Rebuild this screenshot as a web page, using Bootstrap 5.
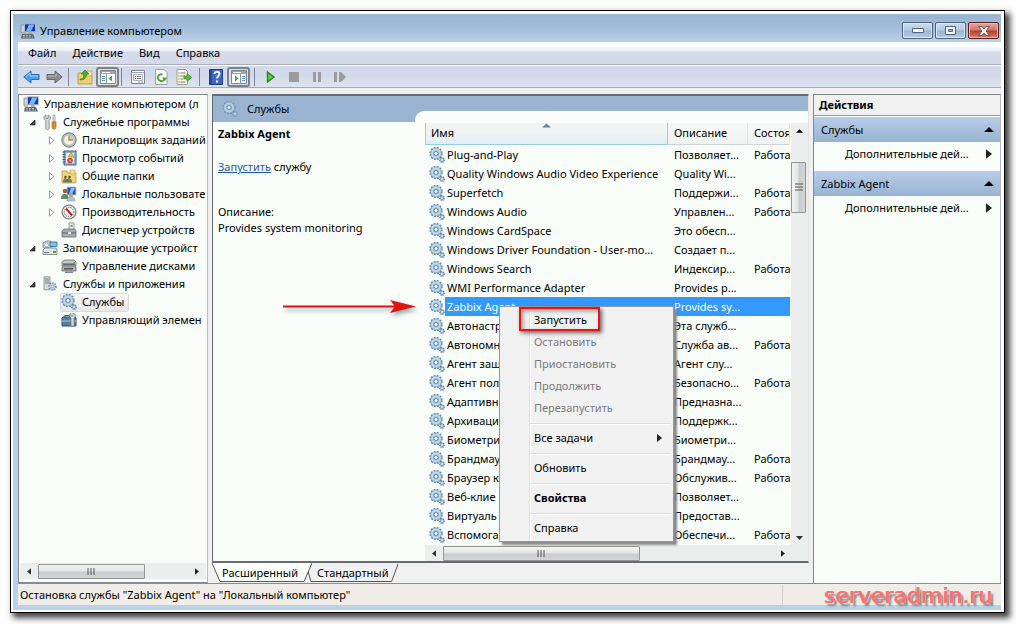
<!DOCTYPE html>
<html lang="ru">
<head>
<meta charset="utf-8">
<meta name="viewport" content="width=device-width, initial-scale=1">
<title>Управление компьютером</title>
<link rel="stylesheet" href="https://cdn.jsdelivr.net/npm/bootstrap@5.3.0/dist/css/bootstrap.min.css">
<style>
:root{--paper:#f9fdf9;--face:#f0f0f0;--steel:#9ab3d0;--edge:#828790}
body{font:11px/18px "Noto Sans","Open Sans",sans-serif;color:#000;background:#fdfdfd;height:100vh;padding:10px 11px 11px 10px;overflow:hidden}
button{font:inherit;color:inherit;background:none;border:0;padding:0;text-align:left}
svg{display:block;flex:none}
.ic{width:16px;height:16px}
.window{height:100%;border:1px solid #000;background:#fff;padding:3px 3px 2px 2px;box-shadow:4px 4px 6px 1px #444}
.frame{height:100%;background:#b9d1ea;padding:0 0 5px 5px}
.titlebar{height:28px;margin-left:-5px;padding:8px 2px 0 7px;background:linear-gradient(#97b4d1,#a4bfdc 55%,#b9d1ea)}
.cap{width:31px;height:17px;border:1px solid #50647e;border-radius:2px;background:linear-gradient(#c9dcee,#b3cbe3 48%,#9ab5d1 52%,#b4cde6);box-shadow:inset 0 0 0 1px #dbe8f5}
.cap.close-cap{border-color:#5b1d1b;background:linear-gradient(#e3a79c,#d4756a 48%,#b93a26 52%,#d08578);box-shadow:inset 0 0 0 1px #e9bcb2}
.caps{gap:2px}
.menubar{height:23px;padding-left:10px;background:linear-gradient(#fbfdfd 20%,#e8ecf5 40%,#d4daea 45%,#d4daea);border-bottom:1px solid #a9aeb8}
.toolbar{height:23px;padding:1px 0 0 2px;background:linear-gradient(#fff 0 1px,#d2d9ea 1px 50%,#dde4f0);border-bottom:1px solid #a5abb5}
.toolbar button{width:23px;height:20px;display:flex;align-items:center;justify-content:center}
.toolbar .on{border:2px solid #7c828b;border-radius:3px;background:#dcdfe6}
.rule{width:1px;height:18px;background:#80858e;margin-left:2px}
.panes{display:grid;grid-template-columns:190px minmax(0,1fr) 188px;column-gap:4px;background:var(--face);padding-top:6px}
.pane{background:var(--paper);border:1px solid var(--edge);border-right-color:#b9bcc2;min-width:0}
.treeitem{height:18px;white-space:nowrap;gap:5px}
.twist{width:9px;height:9px;margin-right:5px}
.lvl1{padding-left:9px}.lvl2{padding-left:28px}
.lvl2.leaf{padding-left:42px}
.picked{background:linear-gradient(#f8f8f8,#e6e6e6);box-shadow:0 0 0 1px #d9d9d9;border-radius:2px;padding-right:4px;margin-right:auto;height:17px;gap:5px}
.track{background:#eaeeec;height:16px}
.track button{width:18px;height:16px;display:flex;align-items:center;justify-content:center}
.treetrack{margin:0 1px 3px}
.thumb{height:15px;border:1px solid #949494;border-radius:1px;background:linear-gradient(#f3f3f3,#e4e6e6 45%,#c8cccd 55%,#d3d6d7)}
.midhead{height:26px;background:var(--steel);padding-left:9px;gap:9px}
.mid{border:2px solid #696b70;border-width:2px 1px 2px 1px;border-right-color:#e3e3e3;background:var(--paper)}
.info{width:212px;padding:3px 5px}
.info p{margin:0 0 15px}
.info a{color:#1e56a8}
.about{line-height:16px;padding-top:4px}
.listwrap{min-width:0;padding-top:1px}
.listwrap::before{content:"";position:absolute;left:-10px;right:0;top:-11px;height:12px;background:#fbfdfc;border-radius:9px 0 0 0}
.svc{width:365px;table-layout:fixed;border-collapse:separate;border-spacing:0}
.svc th{height:22px;line-height:18px;font-weight:400;padding:0 0 2px 6px;background:linear-gradient(#f6f8f7,#f1f3f3);border-bottom:1px solid #d0d4d6;border-right:1px solid #dfe3e5;white-space:nowrap;overflow:hidden}
.svc th:first-child{background:linear-gradient(#f2f4f4 40%,#dfeef5);border:1px solid #96cbe2;border-top:0;padding-left:5px;position:relative}
.svc th svg{position:absolute;left:116px;top:0}
.svc td{height:19px;line-height:19px;padding:0 0 0 6px;white-space:nowrap;overflow:hidden}
.svc td:first-child{padding-left:4px}
.svc .nm{padding-left:2px}
.svc tr.sel td+td,.svc tr.sel .nm{background:#3399ff;color:#fff}
.vtrack{width:17px;background:#eceeed}
.vtrack button{width:16px;height:15px;display:flex;align-items:center;justify-content:center}
.vthumb{width:15px;height:51px;border:1px solid #949494;border-radius:1px;background:linear-gradient(90deg,#f3f3f3,#e4e6e6 45%,#c8cccd 55%,#d3d6d7);margin-top:24px}
.ctx{position:absolute;left:74px;top:184px;width:175px;padding:2px;border:1px solid #979797;background:linear-gradient(90deg,transparent 29px,#e0e0e0 29px 30px,#fff 30px 31px,transparent 31px) #f1f1f1;box-shadow:3px 3px 2px #8a8a8a;z-index:2}
.ctx button{height:22px;width:100%;padding:0 9px 0 32px;display:flex;align-items:center;justify-content:space-between}
.ctx button:disabled{color:#7a7a7a}
.ctx hr{margin:4px 0 2px 28px;border:0;border-top:1px solid #dcdcdc;border-bottom:1px solid #fff;opacity:1}
.mark-box{position:absolute;left:19px;top:0;width:81px;height:24px;border:2px solid #f01010;box-shadow:2px 2px 4px #666,inset 2px 2px 4px #999;pointer-events:none}
.pointer{position:absolute;left:69px;top:177px;filter:drop-shadow(2px 3px 2px #9aa)}
.tabs{height:20px}
.tabs button{position:relative;height:19px;z-index:0}
.tabs svg{position:absolute;inset:0;width:100%;height:100%;z-index:-1}
.tab-a{padding:0 14px 0 10px}
.tab-b{padding:0 10px 0 9px;margin-left:-4px}
.acthead{height:21px;background:var(--face);border-bottom:1px solid #9c9c9c;margin-bottom:1px;padding-left:5px;font-weight:700}
.group{height:25px;background:linear-gradient(#b8cde8,#98b3d1);padding:0 6px 0 7px}
.act{height:29px;padding:0 8px 6px 31px}
.status{height:22px;background:#f0ede9;border-top:1px solid #898c92;padding-left:2px}
.status i{width:1px;height:20px;background:#d0cfcd}
.status i+i{margin:0 85px 0 132px}
.stamp{position:absolute;right:24px;bottom:16px;font:22px/24px "DejaVu Sans",sans-serif;color:#f87474;text-shadow:1px 0 0 #f87474,3px 3px 2px #777}
</style>
</head>
<body>
<svg width="0" height="0" class="position-absolute">
<defs>
<symbol id="pc" viewBox="0 0 16 16"><path d="M1 2h4v8H1z" fill="#cfd3d6" stroke="#83898f" stroke-width=".8"/><path d="M4.500.800h11v8h-11z" fill="#1836b8" stroke="#b4bec8"/><path d="M9 1.500h5.500L11 8H6z" fill="#79b3f0"/><path d="M8 9h4v2H8z" fill="#aab0b5"/><path d="M2 11h11l2 4.500H1z" fill="#5f696f"/><path d="M3 12.500h9M3 14h10" stroke="#c6cdd0" stroke-width=".8" stroke-dasharray="2 1"/></symbol>
<symbol id="gear" viewBox="0 0 16 16"><circle cx="7" cy="6.500" r="5.800" fill="none" stroke="#6587a6" stroke-width="1.800" stroke-dasharray="1.800 1.240"/><circle cx="7" cy="6.500" r="4" fill="none" stroke="#7fa6c4" stroke-width="3.600"/><circle cx="7" cy="6.500" r="3.900" fill="none" stroke="#c0ddef" stroke-width="2"/><circle cx="7" cy="6.500" r="2" fill="#fff" stroke="#5b7c99" stroke-width=".9"/><circle cx="13" cy="13" r="2.200" fill="#a0c0d6" stroke="#6587a6" stroke-width="1.500" stroke-dasharray="1 .73"/><circle cx="13" cy="13" r=".8" fill="#fff"/></symbol>
<symbol id="tools" viewBox="0 0 16 16"><path d="M4 1v3.500h2V1c3 1 3 4 1.200 5.500V14c0 2-3.400 2-3.400 0V6.500C1 5 1.500 2 4 1z" fill="#d6d9db" stroke="#777d82" stroke-width=".8"/><path d="M11 1h2v7h-2z" fill="#dfe2e4" stroke="#888" stroke-width=".6"/><path d="M10 8h4v5c0 3-4 3-4 0z" fill="#e88a2c" stroke="#a65a18" stroke-width=".6"/></symbol>
<symbol id="clock" viewBox="0 0 16 16"><circle cx="8" cy="8" r="7.200" fill="#b9bfc4" stroke="#747a80"/><circle cx="8" cy="8" r="5.300" fill="#f4f6e4" stroke="#9da3a8" stroke-width=".6"/><path d="M8 8V3a5 5 0 0 1 5 5z" fill="#b9d8f4"/><path d="M8 3.500V8h4" fill="none" stroke="#c08b20" stroke-width="1.400"/></symbol>
<symbol id="log" viewBox="0 0 16 16"><path d="M3 1h12v14H3z" fill="#8fb6d8" stroke="#3c6690"/><path d="M5 3h8v10H5z" fill="#e8edf0"/><path d="M1.500 2h3M1.500 4.500h3M1.500 7h3M1.500 9.500h3M1.500 12h3" stroke="#48657f"/><path d="M10 2l3 5H7.500z" fill="#f3bb2e" stroke="#9b7418" stroke-width=".5"/><circle cx="9" cy="10.500" r="2.800" fill="#d33c2d"/><path d="M8 9.500l2 2M10 9.500l-2 2" stroke="#fff" stroke-width=".8"/></symbol>
<symbol id="folder" viewBox="0 0 16 16"><path d="M1 3h5l1 2h8v10H1z" fill="#f3d377" stroke="#c09a3a" stroke-width=".8"/><path d="M9 2h5v4H9z" fill="#f9e59a" stroke="#c09a3a" stroke-width=".6"/><circle cx="4.500" cy="9" r="1.200" fill="#57452b"/><circle cx="8.500" cy="9" r="1.200" fill="#57452b"/><path d="M2.500 14c0-4.500 3.500-4.500 3.500-1 0-3.500 4.500-3.500 4.500 1z" fill="#5f8b7a" stroke="#345" stroke-width=".5"/></symbol>
<symbol id="users" viewBox="0 0 16 16"><path d="M6 1h9v8H6z" fill="#2852b8" stroke="#b9c2cc"/><path d="M10 2h4l-3 6H8z" fill="#8bbcf0"/><circle cx="4" cy="5" r="2.300" fill="#8d6844"/><path d="M0 13c0-7 7-7 8 0z" fill="#5d8c5a"/><circle cx="10" cy="9" r="2" fill="#c79d78"/><path d="M6 15c0-6 8-6 8 0z" fill="#aec4d6" stroke="#758899" stroke-width=".5"/></symbol>
<symbol id="perf" viewBox="0 0 16 16"><circle cx="8" cy="8" r="6.900" fill="#f4f4f4" stroke="#858585" stroke-width="1.400"/><circle cx="8" cy="8" r="4.700" fill="#fff" stroke="#555" stroke-dasharray="1.300 1"/><path d="M5 4.500l6 7" stroke="#cb2020" stroke-width="2"/></symbol>
<symbol id="device" viewBox="0 0 16 16"><path d="M8 .800h5v7H8z" fill="#e2e5e6" stroke="#888e92" stroke-width=".8"/><path d="M9.500 3h2v2h-2z" fill="#75a875"/><path d="M1 9l2-2h11l1 2v6H1z" fill="#a5abb0" stroke="#687077" stroke-width=".8"/><path d="M1 10.500h14v1H1z" fill="#59636a"/><path d="M7 10h3v2H7z" fill="#e0e3e5"/></symbol>
<symbol id="storage" viewBox="0 0 16 16"><path d="M1 3l3-2h5v7H1z" fill="#c9d0d4" stroke="#7b858b" stroke-width=".8"/><circle cx="4.500" cy="5" r="2" fill="#f0f3f4" stroke="#8b9499" stroke-width=".6"/><path d="M8 2h7v4.500H8z" fill="#7fc2e6" stroke="#3a7fae"/><path d="M1 10l2-2h11l1 2v4.500H1z" fill="#e0e3e5" stroke="#737b80" stroke-width=".8"/><path d="M2 12.500h5" stroke="#777"/><path d="M11 11h3v2h-3z" fill="#3caf38"/></symbol>
<symbol id="disk" viewBox="0 0 16 16"><path d="M1 4l3-2h9l2 2v4H1z" fill="#c4c8ca" stroke="#676d70" stroke-width=".8"/><path d="M2 5.500h12v1.300H2z" fill="#50575b"/><path d="M1 9l1-1h12l1 1v4H1z" fill="#a9adaf" stroke="#676d70" stroke-width=".8"/><path d="M3 10h9v1.500H3z" fill="#50575b"/><path d="M4 13.500h8v1.500H4z" fill="#83898c"/><path d="M12.500 4h1.500v1.200h-1.500z" fill="#45b045"/></symbol>
<symbol id="server" viewBox="0 0 16 16"><path d="M2 .8h6v13H2z" fill="#d6dade" stroke="#7e868c" stroke-width=".8"/><path d="M3 3h4M3 5h4M3 7h4" stroke="#727b82"/><circle cx="10.500" cy="10.500" r="3.500" fill="#c1daea" stroke="#6b8ca8" stroke-width="1.600" stroke-dasharray="1.500 1.100"/><circle cx="10.500" cy="10.500" r="1.300" fill="#fff" stroke="#61819d" stroke-width=".6"/></symbol>
<symbol id="wmi" viewBox="0 0 16 16"><path d="M1 6l1-1h12l1 1v8H1z" fill="#557f9d" stroke="#34536a"/><path d="M4 5V3.500h5V5" fill="none" stroke="#3f5a6b" stroke-width="1.200"/><path d="M1 9h14" stroke="#a9c6d8"/><path d="M10 1v3h2V1c3 1 3 3.500 1 5v8h-3V6C8 4.500 8 2 10 1z" fill="#d2dce2" stroke="#6a7880" stroke-width=".7"/></symbol>
<symbol id="opened" viewBox="0 0 9 9"><path d="M7 2v5H2z" fill="#404040" stroke="#111" stroke-width=".6"/></symbol>
<symbol id="closed" viewBox="0 0 9 9"><path d="M2.500.800L7 4.500 2.500 8.200z" fill="#fff" stroke="#999"/></symbol>
<symbol id="al" viewBox="0 0 5 8"><path d="M5 0v8L0 4z" fill="#333"/></symbol>
<symbol id="ar" viewBox="0 0 5 8"><path d="M0 0v8l5-4z" fill="#222"/></symbol>
<symbol id="up" viewBox="0 0 10 5"><path d="M0 5h10L5 0z"/></symbol>
</defs>
</svg>

<div class="window position-relative">
<div class="frame d-flex flex-column">
<header class="titlebar d-flex align-items-start">
  <div class="d-flex align-items-center flex-grow-1 gap-1"><svg class="ic"><use href="#pc"/></svg><span>Управление компьютером</span></div>
  <div class="caps d-flex">
    <button class="cap d-flex align-items-center justify-content-center" aria-label="Свернуть"><svg width="12" height="5"><path d="M.5.500h11v4H.5z" fill="#fff" stroke="#50647e"/></svg></button>
    <button class="cap d-flex align-items-center justify-content-center" aria-label="Развернуть"><svg width="11" height="9"><path d="M.5.500h10v8H.5zM3.500 3.500v2h4v-2z" fill="#fff" stroke="#50647e" fill-rule="evenodd"/></svg></button>
    <button class="cap close-cap d-flex align-items-center justify-content-center" aria-label="Закрыть"><svg width="12" height="10"><path d="M.5.500h3.500l2 2.500 2-2.500h3.500L8 5l3.500 4.500H8L6 7 4 9.500H.5L4 5z" fill="#fff" stroke="#5c3a40" stroke-width=".8"/></svg></button>
  </div>
</header>
<nav class="menubar d-flex align-items-center gap-3">
  <button>Файл</button><button>Действие</button><button>Вид</button><button>Справка</button>
</nav>
<div class="toolbar d-flex align-items-center">
  <button aria-label="Назад"><svg width="17" height="14"><path d="M.8 7L8 1v3.500h8v5H8V13z" fill="#47a2ec" stroke="#2b6fae"/><path d="M3 6.500L7 3v3h8" fill="none" stroke="#a6d5fa"/></svg></button>
  <button aria-label="Вперёд"><svg width="17" height="14"><path d="M16.200 7L9 1v3.500H1v5h8V13z" fill="#8c8c8c" stroke="#666"/><path d="M2 6h8V3.500" fill="none" stroke="#bbb"/></svg></button>
  <span class="rule"></span>
  <button class="ms-1" aria-label="Вверх"><svg class="ic"><path d="M1 4h5l1 2h8v9H1z" fill="#f0cd72" stroke="#b58f3c" stroke-width=".8"/><path d="M10 2h5v5h-5z" fill="#f8e3a0" stroke="#b58f3c" stroke-width=".6"/><path d="M3 10c4 0 4-3 3.500-5H4L8 1l4 4H9.500c0 4-2 6-6.500 6z" fill="#43b32b" stroke="#2c7d1d" stroke-width=".6"/></svg></button>
  <button class="on" aria-label="Дерево консоли"><svg width="16" height="14"><path d="M.5.500h15v13H.5z" fill="#fff" stroke="#7d858d"/><path d="M1 1h14v3H1z" fill="#9ba4ad"/><path d="M2 2.500h8" stroke="#fff"/><path d="M2 6.500h3M2 8.500h3M2 10.500h3" stroke="#4f8fcb"/><path d="M6.500 4v9" stroke="#8a9199"/><path d="M12 5.500v6L8.500 8.500z" fill="#3faa34"/></svg></button>
  <span class="rule"></span>
  <button class="ms-1" aria-label="Свойства"><svg class="ic"><path d="M1.500 1.500h13v13h-13z" fill="#fff" stroke="#7e868e"/><path d="M2 3.500h12" stroke="#9ca5ae"/><path d="M3.500 5.500h9v6h-9z" fill="#f6f8fa" stroke="#a7b0b8"/><path d="M5 7.500h1M5 9.500h1" stroke="#2f6dae"/><path d="M7 7.500h4M7 9.500h4" stroke="#777"/><path d="M8 13h2M11 13h2" stroke="#8a929a"/></svg></button>
  <button aria-label="Обновить"><svg class="ic"><path d="M2.500.500H11L14 3.500v12H2.500z" fill="#fff" stroke="#9aa0a6"/><path d="M11.500 9.500a3.400 3.400 0 1 1-2-4" fill="none" stroke="#3eab2d" stroke-width="1.900"/><path d="M9 8.500h5L12 12z" fill="#3eab2d"/></svg></button>
  <button aria-label="Экспорт"><svg class="ic"><path d="M1 .500h8.500l2 2v13H1z" fill="#fdfbe8" stroke="#a5a08c"/><path d="M4.500 4h5M4.500 7h4M4.500 10h3M4.500 13h5" stroke="#777"/><path d="M2.500 4h1M2.500 7h1M2.500 10h1M2.500 13h1" stroke="#333"/><path d="M8 7h3V4.500L15.700 8.500 11 12.500V10H8z" fill="#4cbf36" stroke="#2f8a22" stroke-width=".7"/></svg></button>
  <span class="rule ms-1"></span>
  <button class="ms-1" aria-label="Справка"><svg class="ic"><path d="M1.500.500h13v15h-13z" fill="#3d69c4" stroke="#1e3c86"/><path d="M2 1h2v14H2z" fill="#2a4c9c"/><path d="M6.500 5c0-3 5-3 5 0 0 2-2.500 2-2.500 4.500" fill="none" stroke="#fff" stroke-width="1.800"/><path d="M8 11.500h2v2H8z" fill="#fff"/></svg></button>
  <button class="on" aria-label="Панель действий"><svg width="16" height="14"><path d="M.5.500h15v13H.5z" fill="#fff" stroke="#7d858d"/><path d="M1 1h14v3H1z" fill="#9ba4ad"/><path d="M2 2.500h8" stroke="#fff"/><path d="M11 6.500h3M11 8.500h3M11 10.500h3" stroke="#4f8fcb"/><path d="M9.500 4v9" stroke="#8a9199"/><path d="M4 5.500v6l3.500-3z" fill="#3faa34"/></svg></button>
  <span class="rule ms-1"></span>
  <button class="ms-1" aria-label="Запустить"><svg width="10" height="12"><path d="M1.500 1l6.500 5-6.500 5z" fill="#5ad03f" stroke="#258518" stroke-width="1.400"/></svg></button>
  <button disabled aria-label="Остановить"><svg width="10" height="10"><path d="M0 0h10v10H0z" fill="#9b9b9b"/></svg></button>
  <button disabled aria-label="Приостановить"><svg width="8" height="10"><path d="M0 0h3v10H0zM5 0h3v10H5z" fill="#9b9b9b"/></svg></button>
  <button disabled aria-label="Перезапустить"><svg width="12" height="10"><path d="M0 0h3v10H0zM5 0h2l5 5-5 5H5z" fill="#9b9b9b"/></svg></button>
</div>

<main class="panes flex-grow-1">
  <aside class="pane d-flex flex-column overflow-hidden">
    <div class="flex-grow-1 overflow-hidden">
      <div class="treeitem d-flex align-items-center ps-1"><svg class="ic"><use href="#pc"/></svg><span>Управление компьютером (л</span></div>
      <div class="treeitem lvl1 d-flex align-items-center"><span class="d-flex align-items-center"><svg class="twist"><use href="#opened"/></svg><svg class="ic"><use href="#tools"/></svg></span><span>Служебные программы</span></div>
      <div class="treeitem lvl2 d-flex align-items-center"><span class="d-flex align-items-center"><svg class="twist"><use href="#closed"/></svg><svg class="ic"><use href="#clock"/></svg></span><span>Планировщик заданий</span></div>
      <div class="treeitem lvl2 d-flex align-items-center"><span class="d-flex align-items-center"><svg class="twist"><use href="#closed"/></svg><svg class="ic"><use href="#log"/></svg></span><span>Просмотр событий</span></div>
      <div class="treeitem lvl2 d-flex align-items-center"><span class="d-flex align-items-center"><svg class="twist"><use href="#closed"/></svg><svg class="ic"><use href="#folder"/></svg></span><span>Общие папки</span></div>
      <div class="treeitem lvl2 d-flex align-items-center"><span class="d-flex align-items-center"><svg class="twist"><use href="#closed"/></svg><svg class="ic"><use href="#users"/></svg></span><span>Локальные пользовате</span></div>
      <div class="treeitem lvl2 d-flex align-items-center"><span class="d-flex align-items-center"><svg class="twist"><use href="#closed"/></svg><svg class="ic"><use href="#perf"/></svg></span><span>Производительность</span></div>
      <div class="treeitem lvl2 leaf d-flex align-items-center"><svg class="ic"><use href="#device"/></svg><span>Диспетчер устройств</span></div>
      <div class="treeitem lvl1 d-flex align-items-center"><span class="d-flex align-items-center"><svg class="twist"><use href="#opened"/></svg><svg class="ic"><use href="#storage"/></svg></span><span>Запоминающие устройст</span></div>
      <div class="treeitem lvl2 leaf d-flex align-items-center"><svg class="ic"><use href="#disk"/></svg><span>Управление дисками</span></div>
      <div class="treeitem lvl1 d-flex align-items-center"><span class="d-flex align-items-center"><svg class="twist"><use href="#opened"/></svg><svg class="ic"><use href="#server"/></svg></span><span>Службы и приложения</span></div>
      <div class="treeitem lvl2 leaf d-flex align-items-center"><span class="picked d-flex align-items-center"><svg class="ic"><use href="#gear"/></svg><span>Службы</span></span></div>
      <div class="treeitem lvl2 leaf d-flex align-items-center"><svg class="ic"><use href="#wmi"/></svg><span>Управляющий элемен</span></div>
    </div>
    <div class="track treetrack d-flex align-items-center">
      <button aria-label="Влево"><svg width="4" height="7"><use href="#al"/></svg></button>
      <div class="thumb d-flex align-items-center justify-content-center" style="width:107px"><svg width="9" height="7"><path d="M1 0v7M4 0v7M7 0v7" stroke="#555"/></svg></div>
      <button class="ms-auto" aria-label="Вправо"><svg width="4" height="7"><use href="#ar"/></svg></button>
    </div>
  </aside>

  <section class="d-flex flex-column">
    <div class="mid flex-grow-1 d-flex flex-column">
      <div class="midhead d-flex align-items-center"><svg class="ic opacity-75"><use href="#gear"/></svg><span>Службы</span></div>
      <div class="d-flex flex-grow-1">
        <div class="info position-relative flex-shrink-0">
          <p><strong>Zabbix Agent</strong></p>
          <p class="mb-4"><a href="#">Запустить</a> службу</p>
          <div class="about"><div>Описание:</div><div>Provides system monitoring</div></div>
          <svg class="pointer" width="136" height="16"><path d="M1 7.500h112" stroke="#e01212" stroke-width="2"/><path d="M108 1l26 6.500L108 14l5-6.500z" fill="#e01212"/></svg>
        </div>
        <div class="listwrap position-relative flex-grow-1 d-flex flex-column">
          <div class="d-flex flex-grow-1">
            <div class="overflow-hidden flex-grow-1">
              <table class="svc">
                <colgroup><col style="width:243px"><col style="width:80px"><col></colgroup>
                <thead><tr><th scope="col">Имя<svg width="9" height="5"><path d="M0 4.500h9L4.500.500z" fill="#5b87a8"/></svg></th><th scope="col">Описание</th><th scope="col">Состояние</th></tr></thead>
                <tbody id="rows"></tbody>
              </table>
            </div>
            <div class="vtrack d-flex flex-column flex-shrink-0">
              <button aria-label="Вверх"><svg width="7" height="4"><use href="#up"/></svg></button>
              <div class="vthumb d-flex align-items-center justify-content-center"><svg width="8" height="9"><path d="M0 1h8M0 4h8M0 7h8" stroke="#555"/></svg></div>
              <button class="mt-auto" aria-label="Вниз"><svg width="7" height="4"><path d="M0 0h7L3.500 4z" fill="#333"/></svg></button>
            </div>
          </div>
          <div class="track d-flex align-items-center pe-3">
            <button aria-label="Влево"><svg width="4" height="7"><use href="#al"/></svg></button>
            <div class="thumb d-flex align-items-center justify-content-center" style="width:197px"><svg width="9" height="7"><path d="M1 0v7M4 0v7M7 0v7" stroke="#555"/></svg></div>
            <button class="ms-auto" aria-label="Вправо"><svg width="4" height="7"><use href="#ar"/></svg></button>
          </div>
          <div class="ctx" role="menu">
            <button>Запустить</button>
            <button disabled>Остановить</button>
            <button disabled>Приостановить</button>
            <button disabled>Продолжить</button>
            <button disabled>Перезапустить</button>
            <hr><button>Все задачи<svg width="5" height="8"><use href="#ar"/></svg></button>
            <hr><button>Обновить</button>
            <hr><button><strong>Свойства</strong></button>
            <hr><button>Справка</button>
            <div class="mark-box"></div>
          </div>
        </div>
      </div>
    </div>
    <div class="tabs d-flex">
      <button class="tab-a"><svg viewBox="0 0 100 19" preserveAspectRatio="none"><path d="M0 0l8 18.500h84L100 0z" fill="#f9fdf9"/><path d="M0 0l8 18.500h84L100 0" fill="none" stroke="#555" vector-effect="non-scaling-stroke"/></svg>Расширенный</button>
      <button class="tab-b"><svg viewBox="0 0 92 19" preserveAspectRatio="none"><path d="M0 8l3 10.500h82L92 0" fill="none" stroke="#555" vector-effect="non-scaling-stroke"/></svg>Стандартный</button>
    </div>
  </section>

  <aside class="pane border-bottom-0">
    <div class="acthead d-flex align-items-center">Действия</div>
    <div class="group d-flex align-items-center justify-content-between"><span>Службы</span><svg width="10" height="5"><use href="#up"/></svg></div>
    <button class="act w-100 d-flex align-items-center justify-content-between"><span>Дополнительные дей...</span><svg width="6" height="10"><use href="#ar"/></svg></button>
    <div class="group d-flex align-items-center justify-content-between"><span>Zabbix Agent</span><svg width="10" height="5"><use href="#up"/></svg></div>
    <button class="act w-100 d-flex align-items-center justify-content-between"><span>Дополнительные дей...</span><svg width="6" height="10"><use href="#ar"/></svg></button>
  </aside>
</main>
<footer class="status d-flex align-items-center"><span class="flex-grow-1">Остановка службы "Zabbix Agent" на "Локальный компьютер"</span><i></i><i></i></footer>
</div>
</div>
<div class="stamp">serveradmin.ru</div>

<script src="https://cdn.jsdelivr.net/npm/bootstrap@5.3.0/dist/js/bootstrap.bundle.min.js"></script>
<script>
const services = [
  ["Plug-and-Play","Позволяет...",1],
  ["Quality Windows Audio Video Experience","Quality Wi...",0],
  ["Superfetch","Поддержи...",1],
  ["Windows Audio","Управлен...",1],
  ["Windows CardSpace","Это обесп...",0],
  ["Windows Driver Foundation - User-mo...","Создает п...",0],
  ["Windows Search","Индексир...",1],
  ["WMI Performance Adapter","Provides p...",0],
  ["Zabbix Agent","Provides sy...",0],
  ["Автонастр","Эта служб...",0],
  ["Автономн","Служба ав...",1],
  ["Агент защ","Агент слу...",0],
  ["Агент пол","Безопасно...",1],
  ["Адаптивн","Предназна...",0],
  ["Архиваци","Поддержк...",0],
  ["Биометри","Биометри...",0],
  ["Брандмау","Брандмау...",1],
  ["Браузер к","Обслужив...",1],
  ["Веб-клие","Позволяет...",0],
  ["Виртуаль","Предостав...",0],
  ["Вспомога","Обеспечи...",1]
];
document.getElementById("rows").innerHTML = services.map(([name, text, on]) =>
  `<tr${name === "Zabbix Agent" ? ' class="sel"' : ""}><td><div class="d-flex align-items-center"><svg class="ic"><use href="#gear"/></svg><span class="nm flex-grow-1">${name}</span></div></td><td>${text}</td><td>${on ? "Работает" : ""}</td></tr>`).join("");
</script>
</body>
</html>
